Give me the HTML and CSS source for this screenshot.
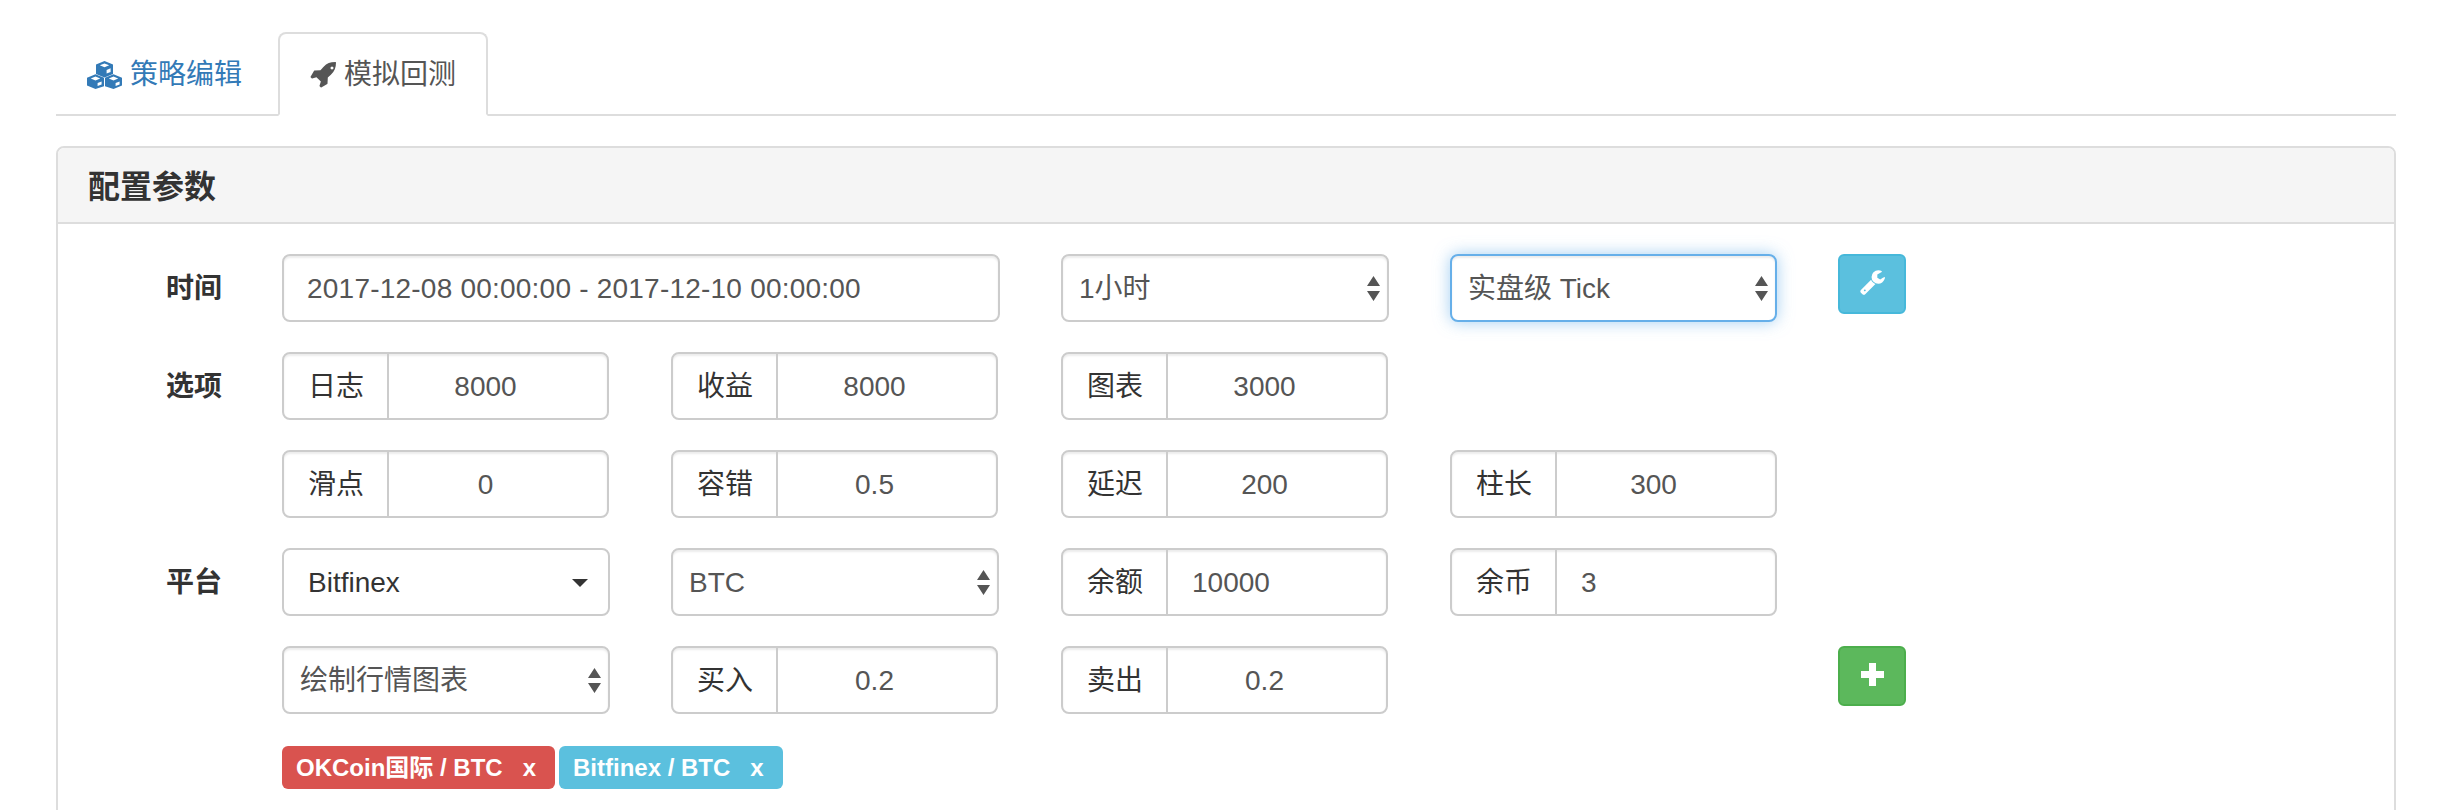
FILE: index.html
```html
<!DOCTYPE html>
<html lang="zh-CN">

<head>
  <title>模拟回测</title>
  <meta charset="utf-8" />
  <link rel="stylesheet" href="styles.css">
</head>

<body>
  <svg class="defs" width="0" height="0">
    <symbol id="updown" viewBox="0 0 13 25">
      <path d="M6.5 0L13 10H0zM0 15h13L6.5 25z" />
    </symbol>
  </svg>
  <div class="page">
    <ul class="tabs">
      <li class="tab">
        <svg class="iconCubes" viewBox="0 0 35 28">
          <path d="M17.5 0L26 3.6V13L17.5 16.6L9 13V3.6zM17.5 2.4L12.8 4.3L17.5 6.2L22.2 4.3zM19.6 9V12.6L23.6 10.9V7.3z" fill-rule="evenodd" />
          <path d="M8.5 13.2L17 16.8V25.2L8.5 28L0 24.6V16.8zM8.5 15.6L3.8 17.5L8.5 19.4L13.2 17.5zM10.6 22V25L14.6 23.6V20.4z" fill-rule="evenodd" />
          <path d="M26.5 13.2L35 16.8V24.6L26.5 28L18 25.2V16.8zM26.5 15.6L21.8 17.5L26.5 19.4L31.2 17.5zM28.6 22V25L32.6 23.6V20.4z" fill-rule="evenodd" />
        </svg>
        策略编辑
      </li>
      <li class="tab active">
        <svg class="iconRocket" viewBox="0 0 1664 1664">
          <path transform="matrix(1 0 0 -1 0 1600)" d="M1504 1216q0 40 -28 68t-68 28t-68 -28t-28 -68t28 -68t68 -28t68 28t28 68zM1664 1568q0 -249 -75.5 -430.5t-253.5 -360.5q-81 -80 -195 -176l-20 -379q-2 -16 -16 -26l-384 -224q-7 -4 -16 -4q-12 0 -23 9l-64 64q-13 14 -8 32l85 276l-281 281l-276 -85q-3 -1 -9 -1q-14 0 -23 9l-64 64q-17 19 -5 39l224 384q10 14 26 16l379 20q96 114 176 195q188 187 358 258t431 71q14 0 24 -9.5t10 -22.5z" />
        </svg>
        模拟回测
      </li>
    </ul>

    <div class="panel">
      <div class="panelHeading">配置参数</div>
      <form class="panelBody">
        <label class="rowLabel">时间</label>
        <input class="field dateRange" value="2017-12-08 00:00:00 - 2017-12-10 00:00:00">
        <div class="selectWrap col3">
          <select class="field"><option>1小时</option></select>
          <svg class="updown"><use href="#updown" /></svg>
        </div>
        <div class="selectWrap col4 narrow">
          <select class="field focused"><option>实盘级 Tick</option></select>
          <svg class="updown"><use href="#updown" /></svg>
        </div>
        <button type="button" class="btn btnInfo" aria-label="设置">
          <svg class="iconWrench" viewBox="0 0 1664 1664">
            <path transform="matrix(1 0 0 -1 0 1700)" d="M384 344q0 26 -19 45t-45 19t-45 -19t-19 -45t19 -45t45 -19t45 19t19 45zM1028 764l-682 -682q-37 -37 -90 -37q-52 0 -91 37l-106 108q-38 36 -38 90q0 53 38 91l681 681q39 -98 114.5 -173.5t173.5 -114.5zM1662 1199q0 -39 -23 -106q-47 -134 -164.5 -217.5t-258.5 -83.5q-185 0 -316.5 131.5t-131.5 316.5t131.5 316.5t316.5 131.5q58 0 121.5 -16.5t107.5 -46.5q16 -11 16 -28t-16 -28l-293 -169v-224l193 -107q5 3 79 48.5t135.5 81t70.5 35.5q15 0 23.5 -10t8.5 -25z" />
          </svg>
        </button>

        <label class="rowLabel">选项</label>
        <div class="inputGroup"><span class="addon">日志</span><input class="groupInput center" value="8000"></div>
        <div class="inputGroup"><span class="addon">收益</span><input class="groupInput center" value="8000"></div>
        <div class="inputGroup"><span class="addon">图表</span><input class="groupInput center" value="3000"></div>
        <div class="spacer"></div>
        <div class="spacer"></div>

        <div class="spacer"></div>
        <div class="inputGroup"><span class="addon">滑点</span><input class="groupInput center" value="0"></div>
        <div class="inputGroup"><span class="addon">容错</span><input class="groupInput center" value="0.5"></div>
        <div class="inputGroup"><span class="addon">延迟</span><input class="groupInput center" value="200"></div>
        <div class="inputGroup"><span class="addon">柱长</span><input class="groupInput center" value="300"></div>
        <div class="spacer"></div>

        <label class="rowLabel">平台</label>
        <div class="dropdown"><span>Bitfinex</span><i class="caret"></i></div>
        <div class="selectWrap">
          <select class="field"><option>BTC</option></select>
          <svg class="updown"><use href="#updown" /></svg>
        </div>
        <div class="inputGroup"><span class="addon">余额</span><input class="groupInput" value="10000"></div>
        <div class="inputGroup"><span class="addon">余币</span><input class="groupInput" value="3"></div>
        <div class="spacer"></div>

        <div class="spacer"></div>
        <div class="selectWrap">
          <select class="field"><option>绘制行情图表</option></select>
          <svg class="updown"><use href="#updown" /></svg>
        </div>
        <div class="inputGroup"><span class="addon">买入</span><input class="groupInput center" value="0.2"></div>
        <div class="inputGroup"><span class="addon">卖出</span><input class="groupInput center" value="0.2"></div>
        <div class="spacer"></div>
        <button type="button" class="btn btnSuccess" aria-label="添加">
          <svg class="iconPlus" viewBox="0 0 23 23"><path d="M8 0h7v8h8v7h-8v8H8v-8H0V8h8z" /></svg>
        </button>

        <div class="tagRow">
          <span class="tag tagDanger">OKCoin国际 / BTC<b class="tagClose">x</b></span>
          <span class="tag tagInfo">Bitfinex / BTC<b class="tagClose">x</b></span>
        </div>
      </form>
    </div>
  </div>
</body>

</html>
```

FILE: styles.css
```css
html,
body {
  height: 100%;
  margin: 0;
  overflow: hidden;
  background: #fff;
}

body,
input,
select {
  font: 28px/40px "Liberation Sans", "Noto Sans CJK SC", sans-serif;
  color: #333;
}

.defs {
  position: absolute;
}

.page {
  padding: 32px 66px 0 56px;
}

/* tabs */
.tabs {
  display: flex;
  gap: 4px;
  margin: 0;
  padding: 0;
  list-style: none;
  height: 84px;
  border-bottom: 2px solid #ddd;
  box-sizing: border-box;
}

.tab {
  display: flex;
  align-items: center;
  height: 84px;
  box-sizing: border-box;
  padding: 2px 30px 0;
  border: 2px solid transparent;
  border-radius: 8px 8px 0 0;
  color: #337ab7;
  white-space: nowrap;
}

.tab:first-child {
  margin-left: -1px;
}

.tab.active {
  color: #555;
  background: #fff;
  border-color: #ddd #ddd #fff;
}

.iconCubes {
  width: 35px;
  height: 28px;
  margin-right: 8px;
  fill: #337ab7;
}

.iconRocket {
  width: 26px;
  height: 26px;
  margin-right: 8px;
  fill: #555;
}

/* panel */
.panel {
  margin-top: 30px;
  height: 760px;
  border: 2px solid #ddd;
  border-radius: 8px;
  box-sizing: border-box;
}

.panelHeading {
  height: 76px;
  box-sizing: border-box;
  padding: 0 30px;
  font-size: 32px;
  font-weight: bold;
  line-height: 78px;
  background: #f5f5f5;
  border-bottom: 2px solid #ddd;
  border-radius: 6px 6px 0 0;
}

.panelBody {
  display: grid;
  grid-template-columns: 116px 389px 390px 389px 388px 68px;
  grid-auto-rows: 68px;
  row-gap: 30px;
  padding: 30px 0 0 108px;
}

.rowLabel {
  font-weight: bold;
  line-height: 70px;
}

/* controls */
.field {
  width: 100%;
  height: 68px;
  box-sizing: border-box;
  padding: 2px 16px 0;
  border: 2px solid #ccc;
  border-radius: 8px;
  background: #fff;
  color: #555;
  box-shadow: inset 0 2px 2px rgba(0, 0, 0, .075);
  outline: none;
}

.dateRange {
  grid-column: span 2;
  width: 718px;
  padding-left: 23px;
  letter-spacing: .22px;
}

select.field {
  appearance: none;
}

.selectWrap {
  position: relative;
  width: 328px;
}

.selectWrap.narrow {
  width: 327px;
}

.focused {
  border-color: #66afe9;
  box-shadow: inset 0 2px 2px rgba(0, 0, 0, .075), 0 0 16px rgba(102, 175, 233, .6);
}

.updown {
  position: absolute;
  top: 22px;
  right: 9px;
  width: 13px;
  height: 25px;
  fill: #555;
  pointer-events: none;
}

.inputGroup {
  display: flex;
  width: 327px;
  height: 68px;
  box-sizing: border-box;
  border: 2px solid #ccc;
  border-radius: 8px;
  box-shadow: inset 0 2px 2px rgba(0, 0, 0, .075);
}

.addon {
  flex: none;
  width: 105px;
  box-sizing: border-box;
  padding: 0 24px;
  line-height: 66px;
  white-space: nowrap;
  border-right: 2px solid #ccc;
  color: #333;
}

.groupInput {
  flex: 1;
  min-width: 0;
  padding: 2px 24px 0;
  border: 0;
  outline: none;
  background: transparent;
  color: #555;
}

.center {
  text-align: center;
  padding-right: 49px;
}

.dropdown {
  display: flex;
  align-items: center;
  justify-content: space-between;
  width: 328px;
  height: 68px;
  box-sizing: border-box;
  padding: 2px 20px 0 24px;
  border: 2px solid #ccc;
  border-radius: 8px;
}

.caret {
  width: 0;
  height: 0;
  border-top: 8px solid #333;
  border-left: 8px solid transparent;
  border-right: 8px solid transparent;
}

.btn {
  display: flex;
  align-items: center;
  justify-content: center;
  width: 68px;
  height: 60px;
  padding: 0 0 3px;
  border: 2px solid;
  border-radius: 6px;
}

.btnInfo {
  background: #5bc0de;
  border-color: #46b8da;
}

.btnSuccess {
  background: #5cb85c;
  border-color: #4cae4c;
}

.iconWrench {
  width: 25px;
  height: 25px;
  fill: #fff;
}

.iconPlus {
  width: 23px;
  height: 23px;
  fill: #fff;
}

/* tags */
.tagRow {
  grid-column: 2 / span 4;
  display: flex;
  gap: 4px;
  margin-top: 2px;
  height: 42px;
}

.tag {
  display: inline-flex;
  align-items: center;
  height: 42px;
  padding: 1px 19px 0 14px;
  border-radius: 6px;
  color: #fff;
  font-size: 24px;
  font-weight: bold;
  line-height: 42px;
  white-space: nowrap;
}

.tagClose {
  margin-left: 20px;
}

.tagDanger {
  background: #d9534f;
}

.tagInfo {
  background: #5bc0de;
}
```
